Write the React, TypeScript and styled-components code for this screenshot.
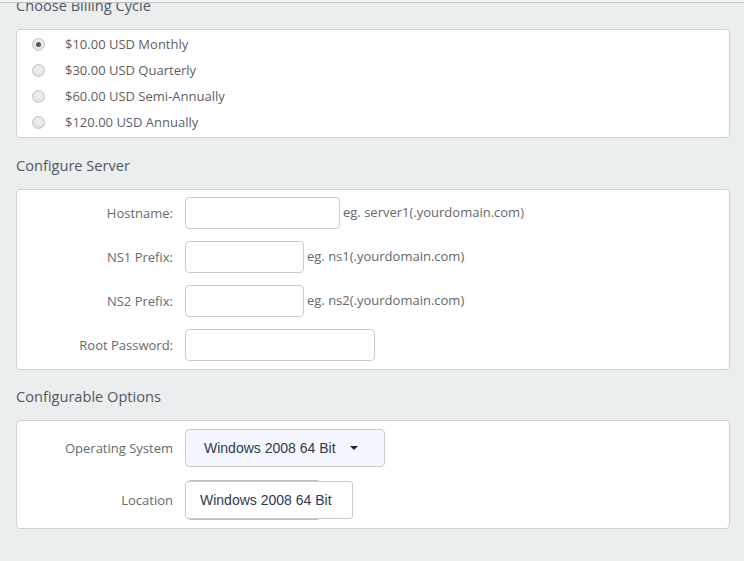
import styled, { createGlobalStyle } from "styled-components";

const GlobalStyle = createGlobalStyle`
    html, body {
        margin: 0;
        padding: 0;
        background: #ebeeee;
        font-family: "Open Sans", "Liberation Sans", sans-serif;
        overflow: hidden;
    }
`;

const TopBar = styled.div`
    position: fixed;
    top: 0;
    left: 0;
    right: 0;
    height: 2px;
    background: #f4f5f5;
    border-bottom: 1px solid #bdbfc0;
    z-index: 10;
`;

const Page = styled.div`
    width: 714px;
    margin: -5px 0 0 16px;
`;

const Heading = styled.h3<{ top: number }>`
    margin: ${(p) => p.top}px 0 14px;
    font-size: 14.6px;
    line-height: 20px;
    font-weight: 400;
    color: #4f5861;
`;

const Panel = styled.div<{ padTop: number; padBottom: number }>`
    background: #fff;
    border: 1px solid #cfd1d2;
    border-radius: 4px;
    padding: ${(p) => p.padTop}px 0 ${(p) => p.padBottom}px;
`;

const RadioRow = styled.label`
    display: flex;
    align-items: center;
    height: 26px;
    padding-left: 15px;
    font-size: 13px;
    color: #5c5f63;
`;

const RadioDot = styled.span<{ checked?: boolean }>`
    position: relative;
    box-sizing: border-box;
    width: 13px;
    height: 13px;
    border-radius: 50%;
    border: 1px solid #c4c4c4;
    background: radial-gradient(circle at 50% 40%, #f2f2f2 0%, #dcdcdc 100%);
    margin-right: 20px;
    flex-shrink: 0;

    &::after {
        content: "";
        display: ${(p) => (p.checked ? "block" : "none")};
        position: absolute;
        left: 50%;
        top: 50%;
        width: 5px;
        height: 5px;
        margin: -2.5px 0 0 -2.5px;
        border-radius: 50%;
        background: #555;
    }
`;

const FormGrid = styled.div<{ gap: number }>`
    display: grid;
    grid-template-columns: 168px 1fr;
    row-gap: ${(p) => p.gap}px;
    align-items: center;
`;

const FieldLabel = styled.div`
    text-align: right;
    padding-right: 12px;
    font-size: 13px;
    color: #666a6e;
`;

const FieldCell = styled.div`
    display: flex;
    align-items: center;
`;

const TextInput = styled.input<{ w: number }>`
    box-sizing: border-box;
    width: ${(p) => p.w}px;
    height: 32px;
    border: 1px solid #c9cccf;
    border-radius: 4px;
    background: #fff;
    outline: none;
`;

const Hint = styled.span`
    margin: -3px 0 0 3px;
    font-size: 13px;
    color: #64686c;
`;

const Dropdown = styled.button`
    box-sizing: border-box;
    width: 200px;
    height: 38px;
    display: flex;
    align-items: center;
    padding: 0 0 0 18px;
    border: 1px solid #c8ccd0;
    border-radius: 4px;
    background: #f4f8fe;
    font-family: "Liberation Sans", Arial, sans-serif;
    font-size: 14px;
    color: #2f3a4f;
    cursor: pointer;
`;

const Caret = styled.span`
    margin-left: 14px;
    width: 0;
    height: 0;
    border-left: 4px solid transparent;
    border-right: 4px solid transparent;
    border-top: 4px solid #222;
`;

const StackWrap = styled.div`
    position: relative;

    &::before {
        content: "";
        position: absolute;
        left: 3px;
        width: 132px;
        top: -1px;
        bottom: -1px;
        border-top: 1px solid #b9bdc1;
        border-bottom: 1px solid #b9bdc1;
        border-radius: 3px;
        background: #e2e5e8;
    }
`;

const SelectBox = styled.div`
    position: relative;
    box-sizing: border-box;
    width: 168px;
    height: 38px;
    display: flex;
    align-items: center;
    padding-left: 14px;
    border: 1px solid #cacdd0;
    border-radius: 3px;
    background: #fff;
    font-family: "Liberation Sans", Arial, sans-serif;
    font-size: 14px;
    color: #2f3a4f;
`;

const cycles = [
    "$10.00 USD Monthly",
    "$30.00 USD Quarterly",
    "$60.00 USD Semi-Annually",
    "$120.00 USD Annually",
];

const serverFields = [
    { label: "Hostname:", width: 155, hint: "eg. server1(.yourdomain.com)" },
    { label: "NS1 Prefix:", width: 119, hint: "eg. ns1(.yourdomain.com)" },
    { label: "NS2 Prefix:", width: 119, hint: "eg. ns2(.yourdomain.com)" },
    { label: "Root Password:", width: 190, hint: "" },
];

function App() {
    return (
        <>
            <GlobalStyle />
            <TopBar />
            <Page>
                <Heading top={0}>Choose Billing Cycle</Heading>
                <Panel padTop={1} padBottom={2}>
                    {cycles.map((c, i) => (
                        <RadioRow key={c}>
                            <RadioDot checked={i === 0} />
                            {c}
                        </RadioRow>
                    ))}
                </Panel>

                <Heading top={17}>Configure Server</Heading>
                <Panel padTop={7} padBottom={8}>
                    <FormGrid gap={12}>
                        {serverFields.map((f) => [
                            <FieldLabel key={f.label + "-label"}>{f.label}</FieldLabel>,
                            <FieldCell key={f.label + "-cell"}>
                                <TextInput w={f.width} />
                                {f.hint && <Hint>{f.hint}</Hint>}
                            </FieldCell>,
                        ])}
                    </FormGrid>
                </Panel>

                <Heading top={16}>Configurable Options</Heading>
                <Panel padTop={8} padBottom={9}>
                    <FormGrid gap={14}>
                        <FieldLabel>Operating System</FieldLabel>
                        <FieldCell>
                            <Dropdown>
                                Windows 2008 64 Bit
                                <Caret />
                            </Dropdown>
                        </FieldCell>
                        <FieldLabel>Location</FieldLabel>
                        <FieldCell>
                            <StackWrap>
                                <SelectBox>Windows 2008 64 Bit</SelectBox>
                            </StackWrap>
                        </FieldCell>
                    </FormGrid>
                </Panel>
            </Page>
        </>
    );
}

export default App;
